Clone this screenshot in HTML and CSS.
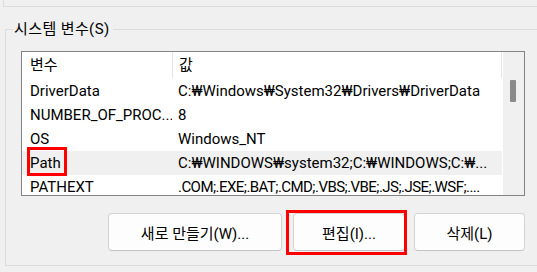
FILE: index.html
```html
<!DOCTYPE html>
<html lang="ko">

<head>
    <meta charset="utf-8">
    <title>시스템 변수</title>
    <link rel="stylesheet" href="styles.css">
</head>

<body>
    <div class="prev-group"></div>

    <fieldset class="group">
        <legend>시스템 변수(S)</legend>

        <div class="listbox">
            <div class="list">
                <div class="row head">
                    <span class="name">변수</span>
                    <span class="value">값</span>
                </div>
                <div class="row">
                    <span class="name">DriverData</span>
                    <span class="value">C:₩Windows₩System32₩Drivers₩DriverData</span>
                </div>
                <div class="row">
                    <span class="name">NUMBER_OF_PROC...</span>
                    <span class="value">8</span>
                </div>
                <div class="row">
                    <span class="name">OS</span>
                    <span class="value">Windows_NT</span>
                </div>
                <div class="row hover">
                    <span class="name marked">Path</span>
                    <span class="value">C:₩WINDOWS₩system32;C:₩WINDOWS;C:₩...</span>
                </div>
                <div class="row">
                    <span class="name">PATHEXT</span>
                    <span class="value tight">.COM;.EXE;.BAT;.CMD;.VBS;.VBE;.JS;.JSE;.WSF;....</span>
                </div>
            </div>
            <div class="scrollbar">
                <div class="thumb"></div>
            </div>
        </div>

        <div class="buttons">
            <button class="btn btn-new">새로 만들기(W)...</button>
            <button class="btn btn-edit">편집(I)...</button>
            <button class="btn btn-del">삭제(L)</button>
        </div>
    </fieldset>
</body>

</html>
```

FILE: styles.css
```css
body {
    margin: 0;
    background-color: #f0f0f0;
    color: #000;
    font-family: Roboto, "Noto Sans CJK KR", sans-serif;
    font-size: 15px;
    overflow: hidden;
}

/* bottom corner of the group above (user variables) */
.prev-group {
    height: 6px;
    margin-left: 3px;
    border-left: 1px solid #dcdcdc;
    border-bottom: 1px solid #dcdcdc;
}

.group {
    margin: 12px -20px 0 5px;
    padding: 0 0 14px 15px;
    border: 1px solid #dcdcdc;
    min-width: 0;
}

.group legend {
    margin-left: -8px;
    padding: 0 3px 0 1px;
    line-height: 20px;
    letter-spacing: 0.4px;
}

.listbox {
    display: flex;
    width: 502px;
    height: 143px;
    margin-top: 12px;
    border: 1px solid #838383;
    background-color: #fff;
}

.list {
    flex: 1;
    overflow: hidden;
}

.row {
    display: flex;
    height: 24px;
    line-height: 24px;
    white-space: nowrap;
}

.row .name {
    width: 142px;
    padding-left: 8px;
    overflow: hidden;
}

.row .value {
    flex: 1;
    padding-left: 6px;
    overflow: hidden;
}

.row .value.tight {
    letter-spacing: -0.55px;
}

.row.head {
    height: 27px;
    line-height: 27px;
}

.row.head .value {
    border-left: 1px solid #e5e5e5;
    border-right: 1px solid #e5e5e5;
    height: 26px;
}

.row.hover {
    background-color: #f0f0f0;
}

.marked {
    position: relative;
    overflow: visible !important;
}

.marked::after {
    content: "";
    position: absolute;
    left: 5px;
    top: -4px;
    width: 34px;
    height: 23px;
    border: 3px solid #f00;
}

.scrollbar {
    width: 21px;
    margin-left: 1px;
    background-color: #f0f0f0;
}

.thumb {
    width: 6px;
    height: 22px;
    margin: 28px 0 0 7px;
    border-radius: 1px;
    background-color: #8a8a8a;
}

.buttons {
    display: flex;
    justify-content: flex-end;
    width: 504px;
    margin-top: 17px;
}

.btn {
    height: 38px;
    margin-left: 10px;
    padding: 0;
    font-family: inherit;
    font-size: 15px;
    color: #000;
    background-color: #fdfdfd;
    border: 1px solid #d3d3d3;
    border-bottom-color: #c4c4c4;
    border-radius: 4px;
}

.btn-new {
    width: 174px;
}

.btn-edit {
    width: 112px;
    margin-left: 11px;
    position: relative;
}

.btn-edit::after {
    content: "";
    position: absolute;
    left: -8px;
    top: -4px;
    right: -3px;
    bottom: -5px;
    border: 3px solid #f00;
}

.btn-del {
    width: 111px;
    margin-left: 9px;
}
```
